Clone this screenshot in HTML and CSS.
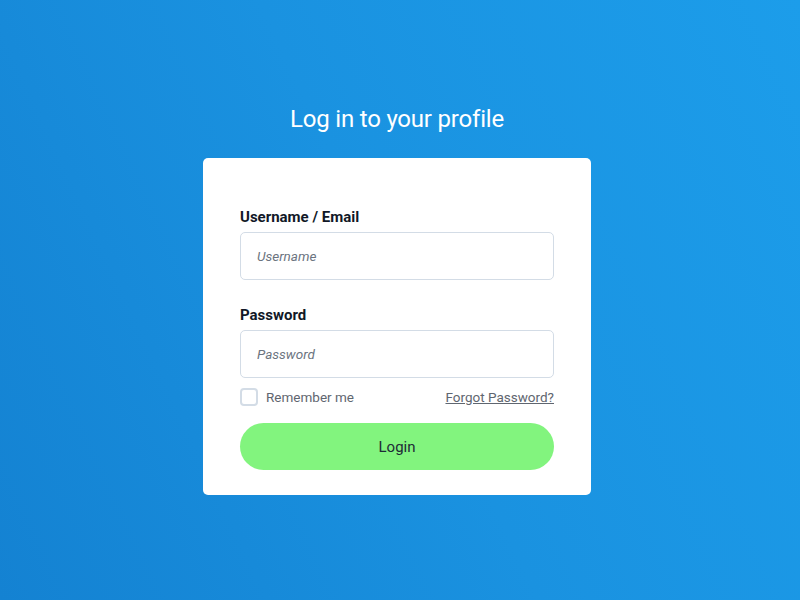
FILE: index.html
```html
<!DOCTYPE html>
<html lang="en">
<head>
<meta charset="utf-8">
<title>Log in</title>
<link rel="stylesheet" href="styles.css">
</head>
<body>
<main class="page">
  <h1 class="title">Log in to your profile</h1>
  <form class="card">
    <div class="field">
      <label class="label" for="user">Username / Email</label>
      <input class="input" id="user" type="text" placeholder="Username">
    </div>
    <div class="field">
      <label class="label" for="pass">Password</label>
      <input class="input" id="pass" type="password" placeholder="Password">
    </div>
    <div class="row">
      <label class="remember"><span class="box"></span><span>Remember me</span></label>
      <a class="forgot" href="#">Forgot Password?</a>
    </div>
    <button class="btn" type="button">Login</button>
  </form>
</main>
</body>
</html>
```
FILE: styles.css
```css
* { box-sizing: border-box; }
html, body { margin: 0; height: 100%; }
body {
  font-family: Roboto, "Liberation Sans", sans-serif;
  background: linear-gradient(65deg, #1482d2 0%, #1a92e0 50%, #1c9dea 100%);
}
.page {
  height: 600px;
  display: flex;
  flex-direction: column;
  align-items: center;
  padding: 104px 6px 0 0;
}
.title {
  margin: 0 0 24px;
  font-size: 24px;
  font-weight: 400;
  color: #fff;
  line-height: 30px;
  letter-spacing: -0.2px;
}
.card {
  width: 388px;
  background: #fff;
  border-radius: 5px;
  padding: 50px 37px 25px;
  display: flex;
  flex-direction: column;
}
.field { display: flex; flex-direction: column; margin-bottom: 26px; }
.field + .field { margin-bottom: 10px; }
.label {
  font-size: 15px;
  font-weight: 700;
  color: #111827;
  line-height: 18px;
  margin-bottom: 6px;
}
.input {
  height: 48px;
  border: 1px solid #d3dce6;
  border-radius: 5px;
  padding: 0 16px;
  font-family: inherit;
  font-size: 13.5px;
  color: #333;
  outline: none;
}
.input::placeholder { color: #6b7480; font-style: italic; }
.row {
  display: flex;
  justify-content: space-between;
  align-items: center;
  height: 18px;
  margin-bottom: 17px;
}
.remember {
  display: flex;
  align-items: center;
  gap: 8px;
  font-size: 13.5px;
  color: #5f6670;
}
.box {
  width: 18px;
  height: 18px;
  border: 2px solid #d3dce6;
  border-radius: 4px;
}
.forgot {
  font-size: 13.5px;
  color: #5f6670;
  text-decoration: underline;
}
.btn {
  height: 47px;
  border: none;
  border-radius: 24px;
  background: #82f47e;
  font-family: inherit;
  font-size: 15px;
  color: #1d2b36;
  cursor: pointer;
}
```
